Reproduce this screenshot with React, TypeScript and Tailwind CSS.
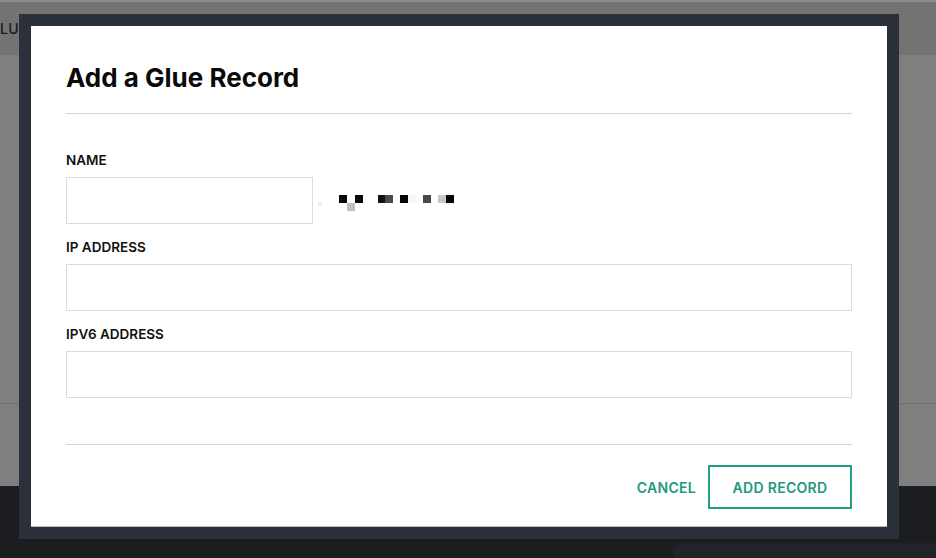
import React from "react";

function Scrambled() {
  // pixelated, redacted hostname next to the name input
  const cells: { x: number; y: number; c: string }[] = [
    { x: 0, y: 12, c: "#f0f0f0" },
    { x: 21, y: 5, c: "#0a0a0a" },
    { x: 29, y: 13, c: "#c0c0c0" },
    { x: 37, y: 5, c: "#0a0a0a" },
    { x: 60, y: 5, c: "#111111" },
    { x: 67, y: 5, c: "#4a4a4a" },
    { x: 82, y: 5, c: "#050505" },
    { x: 90, y: 5, c: "#f6f6f6" },
    { x: 105, y: 5, c: "#474747" },
    { x: 120, y: 5, c: "#c8c8c8" },
    { x: 128, y: 5, c: "#050505" },
  ];
  return (
    <svg width="140" height="24" viewBox="0 0 140 24" className="ml-[5px] mt-[13px]">
      {cells.map((s, i) => (
        <rect key={i} x={s.x} y={s.y} width={s.x === 0 ? 4 : 8} height={s.x === 0 ? 5 : 8} fill={s.c} />
      ))}
    </svg>
  );
}

function Field({ label, children }: { label: string; children: React.ReactNode }) {
  return (
    <div className="flex flex-col">
      <label className="mb-[8px] text-[13.5px] font-semibold leading-[17px] text-[#111]">{label}</label>
      {children}
    </div>
  );
}

export default function App() {
  return (
    <div
      className="relative h-[558px] w-[936px] overflow-hidden bg-[#1b1d21]"
      style={{ fontFamily: "Inter, 'Noto Sans', sans-serif" }}
    >
      {/* page behind the overlay */}
      <div className="flex flex-col">
        <div className="h-[2px] bg-[#8c8c8c]" />
        <div className="flex h-[53px] items-center bg-[#737373]">
          <span className="text-[14px] font-medium tracking-wide text-[#1a1a1a]">LU</span>
        </div>
        <div className="h-[348px] bg-[#7f7f7f]" />
        <div className="h-px bg-[#6f6f6f]" />
        <div className="h-[82px] bg-[#7f7f7f]" />
        <div className="h-[57px]" />
        <div className="flex h-[15px]">
          <div className="ml-[673px] flex-1 rounded-tl-[10px] bg-[#1f242b]" />
        </div>
      </div>

      {/* modal */}
      <div className="absolute left-[19px] top-[14px] w-[880px] border-[12px] border-[#2a313b] bg-white">
        <div className="flex h-[501px] flex-col border-b border-[#bdbdbd] px-[35px]">
          <h2 className="mt-[36px] text-[26px] font-bold leading-[32px] text-[#0a0a0a]">Add a Glue Record</h2>
          <div className="mt-[19px] h-px bg-[#d6d6d6]" />

          <div className="mt-[38px] flex flex-col gap-[15px]">
            <Field label="NAME">
              <div className="flex">
                <input className="h-[47px] w-[247px] border border-[#dcdcdc] bg-white outline-none" />
                <Scrambled />
              </div>
            </Field>
            <Field label="IP ADDRESS">
              <input className="h-[47px] w-full border border-[#dcdcdc] bg-white outline-none" />
            </Field>
            <Field label="IPV6 ADDRESS">
              <input className="h-[47px] w-full border border-[#dcdcdc] bg-white outline-none" />
            </Field>
          </div>

          <div className="mt-[46px] h-px bg-[#d6d6d6]" />

          <div className="mt-[20px] flex items-center justify-end gap-[12px]">
            <button className="px-0 text-[14px] font-semibold tracking-[0.3px] text-[#1b9a7f]">CANCEL</button>
            <button className="h-[44px] w-[144px] border-2 border-[#21a086] text-[14px] font-semibold tracking-[0.3px] text-[#1b9a7f]">
              ADD RECORD
            </button>
          </div>
        </div>
      </div>
    </div>
  );
}
